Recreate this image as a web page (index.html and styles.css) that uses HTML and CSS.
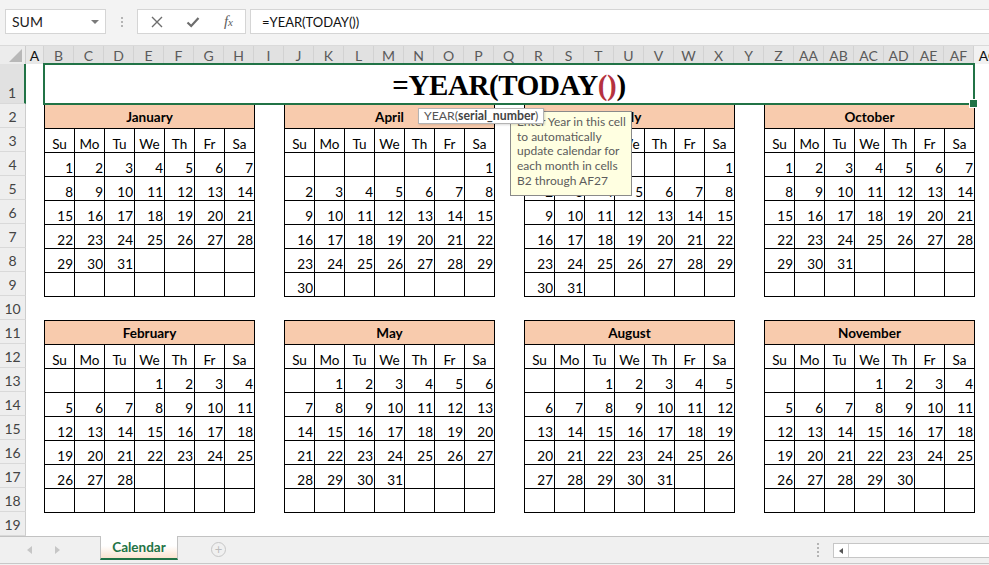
FILE: index.html
```html
<!DOCTYPE html>
<html lang="en">
<head>
<meta charset="utf-8">
<title>Calendar</title>
<link rel="stylesheet" href="styles.css">
</head>
<body>
<div class="app">
  <div class="toolbar">
    <div class="namebox"><span>SUM</span><span class="dd"></span></div>
    <div class="vdots"><i></i><i></i><i></i></div>
    <div class="fbtns">
      <svg width="12" height="12" viewBox="0 0 12 12"><path d="M1 1L11 11M11 1L1 11" stroke="#6d6d6d" stroke-width="1.4" fill="none"/></svg>
      <svg width="14" height="12" viewBox="0 0 14 12"><path d="M1.5 6.5L5.2 10L12.5 2" stroke="#6d6d6d" stroke-width="2.2" fill="none"/></svg>
      <span class="fx">f<small>x</small></span>
    </div>
    <div class="formula">=YEAR(TODAY())</div>
  </div>
  <div class="colhead" id="colhead">
    <div class="corner"><span class="tri"></span></div>
  </div>
  <div class="body">
    <div class="rowhead" id="rowhead"></div>
    <div class="cells" id="cells">
      <div class="title">=YEAR(TODAY<span class="paren">()</span>)</div>
    </div>
  </div>
  <div class="tabbar">
    <div class="nav"><span class="larr"></span><span class="rarr"></span></div>
    <div class="tab">Calendar</div>
    <div class="plus">+</div>
    <div class="hsplit"><i></i><i></i><i></i><i></i></div>
    <div class="hscroll"><span class="sbtn"><span class="sarr"></span></span></div>
  </div>
  <div class="comment">Enter Year in this cell<br>to automatically<br>update calendar for<br>each month in cells<br>B2 through AF27</div>
  <div class="tip">YEAR(<b>serial_number</b>)</div>
</div>
<script src="app.js"></script>
</body>
</html>
```
FILE: styles.css
```css
* { box-sizing: border-box; }
html, body { margin: 0; padding: 0; }
body { font-family: Lato, "Liberation Sans", sans-serif; background: #fff; color: #000; }

.app { position: relative; width: 989px; height: 565px; overflow: hidden; display: flex; flex-direction: column; background: #f1f1f1; }

/* formula bar */
.toolbar { height: 45px; flex: none; background: #f3f3f3; display: flex; align-items: flex-start; padding: 9px 0 0 5px; }
.namebox { width: 101px; height: 25px; flex: none; background: #fff; border: 1px solid #d5d5d5; display: flex; align-items: center; justify-content: space-between; padding: 0 6px; font-size: 14px; color: #222; }
.dd { width: 0; height: 0; border-left: 4px solid transparent; border-right: 4px solid transparent; border-top: 4px solid #7a7a7a; }
.vdots { width: 31px; height: 25px; flex: none; display: flex; flex-direction: column; align-items: center; gap: 2px; padding-top: 8px; }
.vdots i { display: block; width: 2px; height: 2px; background: #b4b4b4; }
.fbtns { width: 109px; height: 25px; flex: none; background: #fff; border: 1px solid #d5d5d5; display: flex; align-items: center; justify-content: space-between; padding: 0 12px 0 13px; }
.fx { font-family: "Liberation Serif", serif; font-style: italic; font-size: 15px; color: #5e5e5e; }
.fx small { font-size: 11px; }
.formula { flex: 1; height: 25px; margin-left: 4px; background: #fff; border: 1px solid #d5d5d5; border-right: none; font-size: 13px; color: #111; padding-left: 11px; display: flex; align-items: center; }

/* column headers */
.colhead { height: 19px; flex: none; display: flex; background: #ececec; border-top: 1px solid #dadada; }
.corner { width: 26px; flex: none; position: relative; background: #ececec; border-right: 1px solid #cdcdcd; }
.tri { position: absolute; right: 3px; bottom: 2px; width: 0; height: 0; border-left: 13px solid transparent; border-bottom: 13px solid #b8b8b8; }
.ch { width: 30px; flex: none; display: flex; align-items: center; justify-content: center; font-size: 14px; color: #111; border-right: 1px solid #d2d2d2; background: #f2f2f2; }
.ch-a { width: 18px; background: #e8e8e8; }
.ch.sel { background: #e1e1e1; color: #5a5a5a; }

/* sheet body */
.body { height: 472px; flex: none; display: flex; background: #fff; }
.rowhead { width: 26px; flex: none; display: flex; flex-direction: column; background: #eeeeee; }
.rh { height: 24px; flex: none; display: flex; align-items: flex-end; justify-content: center; padding-bottom: 2px; font-size: 14px; color: #444; border-bottom: 1px solid #d9d9d9; border-right: 1px solid #cdcdcd; }
.rh1 { height: 40px; background: #e1e1e1; border-right: 2px solid #217346; }

.cells { flex: 1; display: grid; grid-template-columns: 18px repeat(31, 30px) 30px; grid-template-rows: 40px repeat(18, 24px); background: #fff; }

.title { grid-column: 2 / span 31; grid-row: 1; position: relative; display: flex; align-items: flex-end; justify-content: center; padding-bottom: 3px; font-family: "Liberation Serif", serif; font-weight: bold; font-size: 29px; letter-spacing: -0.4px; line-height: 32px; }
.title::after { content: ""; position: absolute; inset: -1px; border: 2px solid #217346; z-index: 2; }
.title::before { content: ""; position: absolute; right: -4px; bottom: -4px; width: 7px; height: 7px; background: #217346; border: 1px solid #fff; z-index: 3; }
.paren { color: #b5323f; }

.cal { display: grid; grid-template-columns: repeat(7, 30px); grid-template-rows: repeat(8, 24px); width: 211px; height: 193px; align-self: start; justify-self: start; border-right: 1px solid #000; border-bottom: 1px solid #000; font-size: 13.5px; }
.c-b { grid-column: 2 / span 7; }
.c-j { grid-column: 10 / span 7; }
.c-r { grid-column: 18 / span 7; }
.c-z { grid-column: 26 / span 7; }
.r-top { grid-row: 2 / span 8; }
.r-bot { grid-row: 11 / span 8; }

.mh { grid-column: 1 / -1; background: #f8cbad; border-left: 1px solid #000; border-top: 1px solid #000; font-weight: bold; display: flex; align-items: center; justify-content: center; }
.dn, .dt { border-left: 1px solid #000; border-top: 1px solid #000; display: flex; align-items: flex-end; line-height: 16px; }
.dn { justify-content: center; }
.dt { justify-content: flex-end; padding-right: 1px; }

/* sheet tabs */
.tabbar { height: 28px; flex: none; display: flex; align-items: flex-start; background: #f0f0f0; border-top: 1px solid #c2c2c2; border-bottom: 1px solid #c8c8c8; }
.nav { width: 100px; flex: none; display: flex; align-items: center; gap: 23px; padding: 9px 0 0 27px; }
.larr { width: 0; height: 0; border-top: 4px solid transparent; border-bottom: 4px solid transparent; border-right: 5px solid #c6c6c6; }
.rarr { width: 0; height: 0; border-top: 4px solid transparent; border-bottom: 4px solid transparent; border-left: 5px solid #c6c6c6; }
.tab { width: 78px; height: 24px; flex: none; margin-top: -1px; display: flex; align-items: center; justify-content: center; font-size: 13.5px; font-weight: bold; color: #217346; background: linear-gradient(#ffffff 45%, #fbe3cf); border-left: 1px solid #c2c2c2; border-right: 1px solid #c2c2c2; border-bottom: 2px solid #217346; }
.plus { width: 15px; height: 15px; flex: none; margin: 5px 0 0 33px; border: 1px solid #c6c6c6; border-radius: 50%; display: flex; align-items: center; justify-content: center; font-size: 13px; line-height: 1; color: #bcbcbc; }
.hsplit { margin: 6px 0 0 auto; width: 2px; display: flex; flex-direction: column; gap: 2px; }
.hsplit i { display: block; width: 2px; height: 2px; background: #b4b4b4; }
.hscroll { width: 156px; height: 15px; flex: none; margin: 6px 0 0 14px; background: #fff; border: 1px solid #c6c6c6; border-right: none; display: flex; }
.sbtn { width: 15px; height: 13px; border-right: 1px solid #d0d0d0; display: flex; align-items: center; justify-content: center; }
.sarr { width: 0; height: 0; border-top: 3px solid transparent; border-bottom: 3px solid transparent; border-right: 4px solid #555; }

/* overlays */
.comment { position: absolute; left: 510px; top: 111px; width: 122px; height: 85px; background: #ffffe1; border: 1px solid #8a8a8a; padding: 3px 0 0 6px; font-size: 12px; line-height: 14.7px; color: #5c5c5c; z-index: 4; white-space: nowrap; }
.tip { position: absolute; left: 418px; top: 108px; height: 16px; padding: 0 5px; background: #fff; border: 1px solid #b4b4b4; font-size: 12.3px; line-height: 14px; color: #555; z-index: 5; white-space: nowrap; box-shadow: 1px 1px 2px rgba(0, 0, 0, 0.15); }
.tip b { color: #444; }
```
FILE: app.js
```js
(function () {
  var colhead = document.getElementById('colhead');
  for (var i = 0; i < 33; i++) {
    var name = i < 26 ? String.fromCharCode(65 + i) : 'A' + String.fromCharCode(65 + i - 26);
    var ch = document.createElement('div');
    ch.className = 'ch' + (i === 0 ? ' ch-a' : '') + (i >= 1 && i <= 31 ? ' sel' : '');
    ch.textContent = name;
    colhead.appendChild(ch);
  }

  var rowhead = document.getElementById('rowhead');
  for (var r = 1; r <= 19; r++) {
    var rh = document.createElement('div');
    rh.className = 'rh' + (r === 1 ? ' rh1' : '');
    rh.textContent = r;
    rowhead.appendChild(rh);
  }

  var months = [
    ['January', 'c-b', 'r-top', 0, 31],
    ['April', 'c-j', 'r-top', 6, 30],
    ['July', 'c-r', 'r-top', 6, 31],
    ['October', 'c-z', 'r-top', 0, 31],
    ['February', 'c-b', 'r-bot', 3, 28],
    ['May', 'c-j', 'r-bot', 1, 31],
    ['August', 'c-r', 'r-bot', 2, 31],
    ['November', 'c-z', 'r-bot', 3, 30]
  ];
  var days = ['Su', 'Mo', 'Tu', 'We', 'Th', 'Fr', 'Sa'];
  var cells = document.getElementById('cells');

  months.forEach(function (m) {
    var cal = document.createElement('div');
    cal.className = 'cal ' + m[1] + ' ' + m[2];
    var h = document.createElement('div');
    h.className = 'mh';
    h.textContent = m[0];
    cal.appendChild(h);
    days.forEach(function (dn) {
      var c = document.createElement('div');
      c.className = 'dn';
      c.textContent = dn;
      cal.appendChild(c);
    });
    for (var k = 0; k < 42; k++) {
      var c = document.createElement('div');
      c.className = 'dt';
      var n = k - m[3] + 1;
      if (n >= 1 && n <= m[4]) c.textContent = n;
      cal.appendChild(c);
    }
    cells.appendChild(cal);
  });
})();
```
